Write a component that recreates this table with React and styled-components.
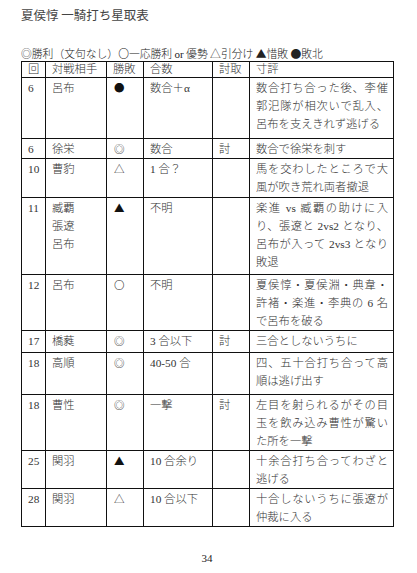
import React from "react";
import styled, { createGlobalStyle } from "styled-components";

const GlobalStyle = createGlobalStyle`
  html, body {
    margin: 0;
    padding: 0;
    background: #ffffff;
  }
`;

const rows = [
  { no: "6", foe: ["呂布"], res: "●", bouts: "数合＋α", kill: "", h: 61,
    note: ["数合打ち合った後、李催", "郭汜隊が相次いで乱入、", "呂布を支えきれず逃げる"] },
  { no: "6", foe: ["徐栄"], res: "◎", bouts: "数合", kill: "討", h: 20,
    note: ["数合で徐栄を刺す"] },
  { no: "10", foe: ["曹豹"], res: "△", bouts: "1 合？", kill: "", h: 39,
    note: ["馬を交わしたところで大", "風が吹き荒れ両者撤退"] },
  { no: "11", foe: ["臧覇", "張遼", "呂布"], res: "▲", bouts: "不明", kill: "", h: 77,
    note: ["楽進 vs 臧覇の助けに入", "り、張遼と 2vs2 となり、", "呂布が入って 2vs3 となり", "敗退"] },
  { no: "12", foe: ["呂布"], res: "〇", bouts: "不明", kill: "", h: 56,
    note: ["夏侯惇・夏侯淵・典韋・", "許褚・楽進・李典の 6 名", "で呂布を破る"] },
  { no: "17", foe: ["橋蕤"], res: "◎", bouts: "3 合以下", kill: "討", h: 22,
    note: ["三合としないうちに"] },
  { no: "18", foe: ["高順"], res: "◎", bouts: "40-50 合", kill: "", h: 42,
    note: ["四、五十合打ち合って高", "順は逃げ出す"] },
  { no: "18", foe: ["曹性"], res: "◎", bouts: "一撃", kill: "討", h: 56,
    note: ["左目を射られるがその目", "玉を飲み込み曹性が驚い", "た所を一撃"] },
  { no: "25", foe: ["関羽"], res: "▲", bouts: "10 合余り", kill: "", h: 37,
    note: ["十余合打ち合ってわざと", "逃げる"] },
  { no: "28", foe: ["関羽"], res: "△", bouts: "10 合以下", kill: "", h: 37,
    note: ["十合しないうちに張遼が", "仲裁に入る"] },
];

const colWidths = [24, 61, 37, 69, 37, 144];
const headers = ["回", "対戦相手", "勝敗", "合数", "討取", "寸評"];

export default function App() {
  return (
    <Page>
      <GlobalStyle />
      <Title>夏侯惇 一騎打ち星取表</Title>
      <Legend>
        ◎勝利（文句なし）〇一応勝利 <Latin>or</Latin> 優勢 △引分け ▲惜敗 ●敗北
      </Legend>
      <Table>
        <colgroup>
          {colWidths.map((w, i) => (
            <col key={i} style={{ width: w }} />
          ))}
        </colgroup>
        <thead>
          <tr>
            {headers.map((h) => (
              <HeadCell key={h}>{h}</HeadCell>
            ))}
          </tr>
        </thead>
        <tbody>
          {rows.map((r, i) => (
            <Row key={i} $h={r.h}>
              <Cell>{r.no}</Cell>
              <Cell>
                {r.foe.map((f) => (
                  <Line key={f}>{f}</Line>
                ))}
              </Cell>
              <Cell>
                <Mark>{r.res}</Mark>
              </Cell>
              <Cell>{r.bouts}</Cell>
              <Cell>{r.kill}</Cell>
              <Cell $pad={5}>
                {r.note.map((n, j) => (
                  <Line key={j} $fill={j < r.note.length - 1}>
                    {n}
                  </Line>
                ))}
              </Cell>
            </Row>
          ))}
        </tbody>
      </Table>
      <PageNo>34</PageNo>
    </Page>
  );
}

const Page = styled.div`
  width: 372px;
  padding: 6px 0 0 21px;
  color: #2a2a2a;
`;

const Title = styled.h1`
  margin: 0;
  font-family: "Noto Sans CJK JP", sans-serif;
  font-weight: 400;
  font-size: 12.5px;
  line-height: 18px;
  color: #444;
`;

const Legend = styled.p`
  margin: 22px 0 0;
  font-family: "Noto Sans CJK JP", sans-serif;
  font-size: 10.8px;
  font-weight: 300;
  line-height: 14px;
  white-space: nowrap;
  color: #222;
`;

const Latin = styled.span`
  font-family: "Liberation Serif", serif;
  font-size: 11px;
`;

const Table = styled.table`
  width: 372px;
  table-layout: fixed;
  border-collapse: collapse;
  font-family: "Liberation Serif", "Noto Sans CJK JP", serif;
  font-size: 11.3px;
  font-weight: 300;
  color: #333;
`;

const HeadCell = styled.th`
  height: 15px;
  padding: 0 0 0 6px;
  border: 1px solid #111;
  text-align: left;
  font-weight: 300;
  line-height: 15px;
  vertical-align: middle;
`;

const Row = styled.tr`
  height: ${(p) => p.$h}px;
`;

const Cell = styled.td`
  padding: 1px ${(p) => p.$pad ?? 2}px 0 6px;
  border: 1px solid #111;
  vertical-align: top;
  line-height: 18px;
  white-space: nowrap;
  overflow: hidden;
`;

const Line = styled.div`
  text-align: ${(p) => (p.$fill ? "justify" : "left")};
  text-align-last: ${(p) => (p.$fill ? "justify" : "left")};
`;

const Mark = styled.span`
  display: inline-block;
  padding-left: 1px;
  font-family: "Noto Sans CJK JP", sans-serif;
  font-size: 10.5px;
  color: #111;
`;

const PageNo = styled.div`
  margin-top: 24px;
  text-align: center;
  font-family: "Liberation Serif", serif;
  font-size: 11px;
  line-height: 14px;
  color: #222;
`;
